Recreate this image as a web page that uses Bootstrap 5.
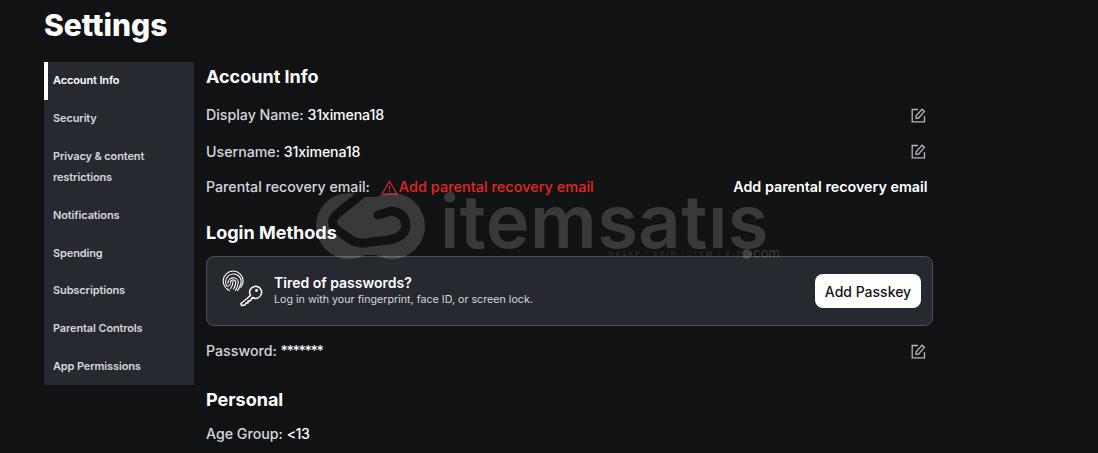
<!DOCTYPE html>
<html lang="en"><head><meta charset="utf-8"><title>Settings</title>
<link href="https://cdn.jsdelivr.net/npm/bootstrap@5.3.0/dist/css/bootstrap.min.css" rel="stylesheet">
<style>
html,body{height:100%}
body{background:#111214;color:#d5d7dd;font-family:Inter,"Noto Sans",sans-serif;overflow:hidden;position:relative}
.shell{padding-left:44px;width:933px}
.page-title{font-size:30px;font-weight:800;color:#fff;line-height:34px;margin:8px 0 20px}
.side{width:150px;background:#272930;flex:none;align-self:flex-start}
.side a{display:block;padding:8.4px 9px;font-size:11px;letter-spacing:-.13px;line-height:21px;font-weight:600;color:#d5d7dd;text-decoration:none}
.side a.on{color:#fff;box-shadow:inset 4px 0 0 #fff}
.main{margin-left:12px;flex:1;min-width:0}
.sec{font-size:18px;font-weight:700;color:#fff;line-height:24px;margin:0}
.sec-a{margin-top:3px}.sec-b{margin-top:23px}.sec-c{margin-top:26px}
.line{font-size:14.2px;font-weight:500;line-height:22px;color:#d5d7dd}
.line b{font-weight:500;color:#fff;letter-spacing:-.15px}
.line b.stars{letter-spacing:-1.4px}
.line b.age{letter-spacing:-.5px}
.l1{margin-top:15px}.l2{margin-top:14.5px}.l3{margin-top:13.5px}.l4{margin-top:14px}.l5{margin-top:11px}
.warn{color:#e82525;display:inline-flex;align-items:center;gap:1px;margin-left:11px;font-size:14.5px}
.addlink{color:#fff;font-weight:600;font-size:14.3px;margin-right:5.5px}
.edit{color:#b5b7bd;margin-right:7px;display:block}
.pk{background:#272930;border:1px solid #4d4f55;border-radius:8px;height:70px;padding:0 11px 0 15px;margin-top:11px}
.pk h6{font-size:14px;font-weight:600;color:#fff;margin:0;line-height:18px}
.pk p{font-size:10.7px;font-weight:400;color:#d5d7dd;margin:0;line-height:16px}
.pk-btn{background:#fff;color:#111214;border-radius:8px;font-size:14px;font-weight:500;padding:0;width:106px;height:34px;border:0}
.wm{position:absolute;left:315px;top:190px;width:470px;height:72px;color:rgba(255,255,255,.17);pointer-events:none}
.wm svg{display:block}
.wm-name{position:absolute;left:125px;top:4px;font:600 74px/54px Inter,sans-serif;letter-spacing:.5px;white-space:nowrap}
.wm-sub{position:absolute;left:294px;top:60px;font:700 6.5px/8px Inter,sans-serif;letter-spacing:2.1px;white-space:nowrap;color:rgba(255,255,255,.11)}
.wm-dot{position:absolute;left:427px;top:59px;width:10px;height:10px;border-radius:50%;background:currentColor}
.wm-com{position:absolute;left:438px;top:57px;font:500 13px/13px Inter,sans-serif;white-space:nowrap}
</style></head><body>
<div class="shell">
<h1 class="page-title">Settings</h1>
<div class="d-flex">
<nav class="side">
<a class="on" href="#">Account Info</a><a href="#">Security</a><a href="#">Privacy &amp; content restrictions</a><a href="#">Notifications</a><a href="#">Spending</a><a href="#">Subscriptions</a><a href="#">Parental Controls</a><a href="#">App Permissions</a>
</nav>
<div class="main">
<h2 class="sec sec-a">Account Info</h2>
<div class="d-flex justify-content-between align-items-center line l1"><span>Display Name: <b>31ximena18</b></span>
<svg class="edit" width="15" height="15" viewBox="0 0 15 15" fill="none" stroke="currentColor" stroke-width="1.3"><path d="M7 1.500H1.200v12.300h12.300V8"/><path d="M5 10.300V8L11 1.200l2.400 2.200-6 6.900z"/></svg></div>
<div class="d-flex justify-content-between align-items-center line l2"><span>Username: <b>31ximena18</b></span>
<svg class="edit" width="15" height="15" viewBox="0 0 15 15" fill="none" stroke="currentColor" stroke-width="1.3"><path d="M7 1.500H1.200v12.300h12.300V8"/><path d="M5 10.300V8L11 1.200l2.400 2.200-6 6.900z"/></svg></div>
<div class="d-flex justify-content-between align-items-center line l3"><span class="d-inline-flex align-items-center">Parental recovery email: <span class="warn"><svg width="17" height="15" viewBox="0 0 17 15" fill="none" stroke="#e02030" stroke-width="1.2"><path d="M8.500 1.200 16 14H1z"/><path d="M8.500 5.500v4.500M8.500 11v1.400"/></svg>Add parental recovery email</span></span><span class="addlink">Add parental recovery email</span></div>
<h2 class="sec sec-b">Login Methods</h2>
<div class="pk d-flex align-items-center justify-content-between">
<div class="d-flex align-items-center gap-2">
<svg width="44" height="42" viewBox="0 0 44 42" fill="none" stroke="#fff" stroke-width="1.100" stroke-linecap="round" stroke-linejoin="round"><path d="M3.500 17.500A10 10 0 1 1 18.800 17.500"/><path d="M5.200 16.500A7.800 7.800 0 1 1 18 16Q17 19 15.500 20.500"/><path d="M6 13A5.200 5.200 0 0 1 16.300 12Q16.300 16 13.500 20.500"/><path d="M8.500 13A2.700 2.700 0 0 1 13.800 12Q13.800 15.500 11.500 19"/><path d="M11 11.500Q11.200 15 8.500 18.500M6.500 16Q7.500 14.500 8.300 14.500M4.500 18.500Q6 20 7.500 20.500"/><path d="M28.500 25.500 19 33.500l.5 2 3.500-.5 1-2h2v-2h2l2.500-3.500A6 6 0 1 0 28.500 25.500z" stroke-width="1.500"/><circle cx="34.500" cy="20.500" r="1.400" fill="#fff" stroke="none"/></svg>
<div><h6>Tired of passwords?</h6><p>Log in with your fingerprint, face ID, or screen lock.</p></div>
</div>
<button class="btn pk-btn" type="button">Add Passkey</button>
</div>
<div class="d-flex justify-content-between align-items-center line l4"><span>Password: <b class="stars">*******</b></span>
<svg class="edit" width="15" height="15" viewBox="0 0 15 15" fill="none" stroke="currentColor" stroke-width="1.3"><path d="M7 1.500H1.200v12.300h12.300V8"/><path d="M5 10.300V8L11 1.200l2.400 2.200-6 6.900z"/></svg></div>
<h2 class="sec sec-c">Personal</h2>
<div class="line l5">Age Group: <b class="age">&lt;13</b></div>
</div>
</div>
</div>
<div class="wm">
<svg width="112" height="72" viewBox="0 0 112 72"><defs><mask id="lg"><circle cx="34" cy="36" r="33" fill="#fff"/><circle cx="77" cy="36" r="33" fill="#fff"/><path d="M34 7h43v58H34z" fill="#fff"/><path d="M48 3 22 24Q13 32 22 40L36 50Q44 55 56 52L74 50Q90 47 91 36Q90 22 76 21L63 25" fill="none" stroke="#000" stroke-width="9" stroke-linecap="round"/></mask></defs><rect width="112" height="72" fill="currentColor" mask="url(#lg)"/></svg>
<span class="wm-name">itemsatıs</span><span class="wm-sub">HESAP / SKIN / ITEM / E-PIN</span><span class="wm-dot"></span><span class="wm-com">com</span>
</div>
</body></html>
